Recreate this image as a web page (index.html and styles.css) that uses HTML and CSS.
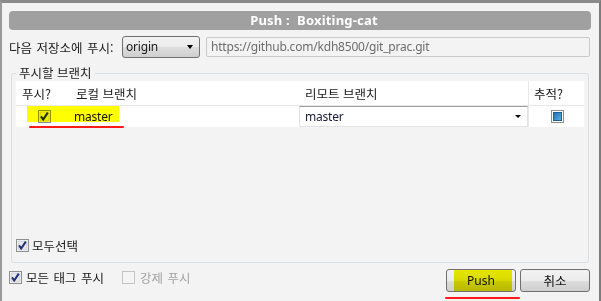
FILE: index.html
```html
<!DOCTYPE html>
<html lang="ko">
<head>
<meta charset="utf-8">
<link rel="stylesheet" href="styles.css">
</head>
<body>
<div class="window">
  <div class="titlebar"><span class="title-text">Push :  Boxiting-cat</span></div>

  <div class="repo-row">
    <span class="repo-label ko">다음 저장소에 푸시:</span>
    <div class="combo">
      <span class="combo-text">origin</span>
      <span class="arrow"></span>
    </div>
    <div class="url-box">https://github.com/kdh8500/git_prac.git</div>
  </div>

  <fieldset class="group">
    <legend class="group-legend ko">푸시할 브랜치</legend>
    <div class="group-inner">
      <div class="branch-table">
        <div class="row head-row">
          <div class="cell c-push ko">푸시?</div>
          <div class="cell c-local ko">로컬 브랜치</div>
          <div class="cell c-remote ko">리모트 브랜치</div>
          <div class="cell c-track ko">추적?</div>
        </div>
        <div class="row data-row">
          <span class="marker"></span>
          <span class="underline under-row"></span>
          <div class="cell c-push center">
            <svg class="cb" width="13" height="13" viewBox="0 0 13 13"><rect x="0.5" y="0.5" width="12" height="12" fill="#fff" stroke="#8f8f8f"/><rect x="2" y="2" width="9" height="9" fill="#eeeeee" stroke="#b8bcc4" stroke-width="0.6"/><path d="M3 6.4 L5.2 9.5 L9.8 2.6" fill="none" stroke="#1e2a6a" stroke-width="2"/></svg>
          </div>
          <div class="cell c-local"><span class="local-name">master</span></div>
          <div class="cell c-remote">
            <div class="remote-combo"><span>master</span><span class="arrow small"></span></div>
          </div>
          <div class="cell c-track center">
            <svg class="cb" width="13" height="13" viewBox="0 0 13 13"><defs><linearGradient id="bl" x1="0" y1="0" x2="1" y2="1"><stop offset="0" stop-color="#1d6fb0"/><stop offset="1" stop-color="#5fb5e6"/></linearGradient></defs><rect x="0.5" y="0.5" width="12" height="12" fill="#fff" stroke="#8f8f8f"/><rect x="2.5" y="2.5" width="8" height="8" fill="url(#bl)" stroke="#1f5f95"/></svg>
          </div>
        </div>
      </div>
      <label class="check-line select-all ko">
        <svg class="cb" width="13" height="13" viewBox="0 0 13 13"><rect x="0.5" y="0.5" width="12" height="12" fill="#fff" stroke="#8f8f8f"/><rect x="2" y="2" width="9" height="9" fill="#e6e7eb" stroke="#b8bcc4" stroke-width="0.6"/><path d="M3 6.4 L5.2 9.5 L9.8 2.6" fill="none" stroke="#23307a" stroke-width="2"/></svg>
        <span>모두선택</span>
      </label>
    </div>
  </fieldset>

  <div class="bottom-row">
    <div class="options">
      <label class="check-line ko">
        <svg class="cb" width="13" height="13" viewBox="0 0 13 13"><rect x="0.5" y="0.5" width="12" height="12" fill="#fff" stroke="#8f8f8f"/><rect x="2" y="2" width="9" height="9" fill="#e6e7eb" stroke="#b8bcc4" stroke-width="0.6"/><path d="M3 6.4 L5.2 9.5 L9.8 2.6" fill="none" stroke="#23307a" stroke-width="2"/></svg>
        <span>모든 태그 푸시</span>
      </label>
      <label class="check-line disabled ko">
        <svg class="cb" width="13" height="13" viewBox="0 0 13 13"><rect x="0.5" y="0.5" width="12" height="12" fill="#f4f4f4" stroke="#c4c4c4"/></svg>
        <span>강제 푸시</span>
      </label>
    </div>
    <div class="buttons">
      <div class="btn-wrap">
        <button class="btn push-btn"><span class="marker btn-marker"></span><span class="btn-label">Push</span></button>
        <span class="underline under-btn"></span>
      </div>
      <button class="btn cancel-btn ko">취소</button>
    </div>
  </div>
</div>
</body>
</html>
```

FILE: styles.css
```css
* { box-sizing: border-box; }
html, body { margin: 0; padding: 0; }
body {
  font-family: "Noto Sans", "Noto Sans CJK KR", sans-serif;
  font-size: 12px;
  letter-spacing: -0.2px;
  color: #1a1a1a;
  background: #f3f3f3;
}
.ko {
  font-family: "Noto Sans CJK KR", sans-serif;
  font-size: 12.5px;
  letter-spacing: 0;
}
.window {
  width: 601px;
  height: 301px;
  overflow: hidden;
  background: #f3f3f3;
  border-top: 3px solid #8a8a8a;
  border-left: 2px solid #9a9a9a;
  border-right: 2px solid #7c7c7c;
  padding: 8px 8px 0 7px;
  display: flex;
  flex-direction: column;
}
.titlebar {
  height: 19px;
  background: #a0a0a0;
  border-radius: 4px;
  display: flex;
  align-items: center;
  justify-content: center;
  padding-left: 28px;
}
.title-text {
  color: #fff;
  font-weight: bold;
  font-size: 13px;
  letter-spacing: 0.2px;
  white-space: pre;
  line-height: 19px;
}
.repo-row {
  margin-top: 6px;
  height: 22px;
  display: flex;
  align-items: center;
}
.repo-label {
  width: 113px;
  flex: none;
  white-space: nowrap;
  word-spacing: 1px;
}
.combo {
  width: 78px;
  height: 22px;
  flex: none;
  border: 1px solid #707070;
  border-radius: 3px;
  background: linear-gradient(#f2f2f2 0%, #ebebeb 50%, #dddddd 51%, #cfcfcf 100%);
  display: flex;
  align-items: center;
  padding: 0 6px 0 3px;
  justify-content: space-between;
}
.combo-text { line-height: 18px; }
.arrow {
  width: 0; height: 0;
  border-left: 3.5px solid transparent;
  border-right: 3.5px solid transparent;
  border-top: 4px solid #000;
}
.arrow.small {
  border-left-width: 3px;
  border-right-width: 3px;
  border-top-width: 3px;
}
.url-box {
  flex: 1;
  margin-left: 6px;
  margin-right: 1px;
  height: 20px;
  border: 1px solid #c7c9cc;
  border-radius: 2px;
  background: #f3f3f3;
  color: #6d6d6d;
  padding-left: 4px;
  line-height: 18px;
}
.group {
  margin: 7px 2px 0 2px;
  padding: 0 4px;
  border: 1px solid #d5dfe5;
  border-radius: 3px;
  height: 198px;
  min-width: 0;
}
.group-legend {
  padding: 0 3px;
  margin-left: 0;
  line-height: 16px;
}
.group-inner {
  height: 181px;
  display: flex;
  flex-direction: column;
  justify-content: space-between;
  padding-bottom: 10px;
}
.branch-table {
  background: #fff;
}
.row {
  display: grid;
  grid-template-columns: 56px 226px 230px 56px;
  position: relative;
}
.head-row {
  height: 25px;
  border-bottom: 1px solid #e8e8e8;
  align-items: center;
}
.head-row .c-push { padding-left: 6px; }
.head-row .c-local { padding-left: 4px; }
.head-row .c-remote { padding-left: 7px; }
.head-row .c-track { padding-left: 5px; }
.cell {
  height: 100%;
  display: flex;
  align-items: center;
}
.c-track { border-left: 1px solid #e8e8e8; }
.center { justify-content: center; }
.data-row {
  height: 21px;
}
.data-row .c-track { padding-left: 1px; }
.local-name { padding-left: 2px; color: #141414; position: relative; }
.remote-combo {
  margin-left: 1px;
  width: 100%;
  height: 21px;
  border: 1px solid #e2e2e2;
  border-top-color: #9c9c9c;
  background: #fff;
  display: flex;
  align-items: center;
  justify-content: space-between;
  padding: 0 6px 0 5px;
  color: #1b1b38;
}
.cb { display: block; flex: none; }
.marker {
  position: absolute;
  background: #ffff00;
  mix-blend-mode: multiply;
  pointer-events: none;
  z-index: 2;
}
.data-row .marker {
  left: 11px;
  top: 0;
  width: 92px;
  height: 16px;
}
.underline {
  position: absolute;
  height: 2px;
  background: #ff1a1a;
  border-radius: 1px;
}
.under-row {
  left: 13px;
  top: 20px;
  width: 95px;
  z-index: 3;
}
.check-line {
  display: flex;
  align-items: center;
  gap: 3px;
  height: 14px;
}
.bottom-row {
  margin-top: 6px;
  display: flex;
  justify-content: space-between;
  align-items: flex-start;
}
.options {
  display: flex;
  margin-top: 1px;
}
.options .check-line { gap: 4px; word-spacing: 1px; }
.options .check-line:first-child { width: 113px; }
.check-line.disabled { color: #a3a3a3; gap: 5px; }
.buttons {
  display: flex;
  gap: 4px;
  margin-right: 1px;
}
.btn-wrap { position: relative; }
.btn {
  height: 23px;
  border: 1px solid #707070;
  border-radius: 3px;
  background: linear-gradient(#f2f2f2 0%, #ebebeb 50%, #dddddd 51%, #cfcfcf 100%);
  font-family: "Noto Sans", "Noto Sans CJK KR", sans-serif;
  font-size: 12px;
  color: #111;
  padding: 0;
  display: flex;
  align-items: center;
  justify-content: center;
  position: relative;
}
.btn.ko { font-family: "Noto Sans CJK KR", sans-serif; font-size: 12.5px; }
.push-btn { width: 70px; }
.cancel-btn { width: 70px; }
.btn-label { position: relative; }
.btn-marker {
  left: 7px;
  top: 0;
  width: 58px;
  height: 21px;
  background: linear-gradient(#f4f400, #e2e200);
}
.under-btn {
  left: -1px;
  top: 28px;
  width: 75px;
}
```
